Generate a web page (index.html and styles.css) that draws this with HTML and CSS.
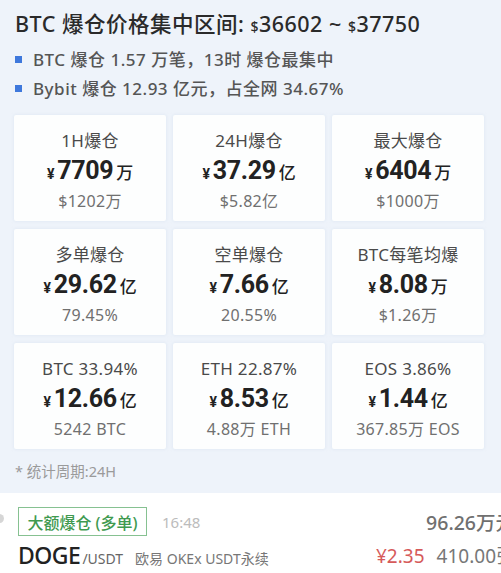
FILE: index.html
```html
<!DOCTYPE html>
<html lang="zh-CN">
<head>
<meta charset="utf-8">
<title>BTC 爆仓</title>
<link rel="stylesheet" href="styles.css">
</head>
<body>
<div class="page">
  <header class="head">
    <h1 class="title">BTC 爆仓价格集中区间: <span class="dollar">$</span>36602 ~ <span class="dollar">$</span>37750</h1>
    <ul class="bullets">
      <li>BTC 爆仓 1.57 万笔，13时 爆仓最集中</li>
      <li>Bybit 爆仓 12.93 亿元，占全网 34.67%</li>
    </ul>
  </header>

  <section class="grid">
    <div class="card"><div class="lbl">1H爆仓</div><div class="val"><span class="cur">¥</span>7709<span class="unit">万</span></div><div class="sub">$1202万</div></div>
    <div class="card"><div class="lbl">24H爆仓</div><div class="val"><span class="cur">¥</span>37.29<span class="unit">亿</span></div><div class="sub">$5.82亿</div></div>
    <div class="card"><div class="lbl">最大爆仓</div><div class="val"><span class="cur">¥</span>6404<span class="unit">万</span></div><div class="sub">$1000万</div></div>
    <div class="card"><div class="lbl">多单爆仓</div><div class="val"><span class="cur">¥</span>29.62<span class="unit">亿</span></div><div class="sub">79.45%</div></div>
    <div class="card"><div class="lbl">空单爆仓</div><div class="val"><span class="cur">¥</span>7.66<span class="unit">亿</span></div><div class="sub">20.55%</div></div>
    <div class="card"><div class="lbl">BTC每笔均爆</div><div class="val"><span class="cur">¥</span>8.08<span class="unit">万</span></div><div class="sub">$1.26万</div></div>
    <div class="card"><div class="lbl">BTC 33.94%</div><div class="val"><span class="cur">¥</span>12.66<span class="unit">亿</span></div><div class="sub">5242 BTC</div></div>
    <div class="card"><div class="lbl">ETH 22.87%</div><div class="val"><span class="cur">¥</span>8.53<span class="unit">亿</span></div><div class="sub">4.88万 ETH</div></div>
    <div class="card"><div class="lbl">EOS 3.86%</div><div class="val"><span class="cur">¥</span>1.44<span class="unit">亿</span></div><div class="sub">367.85万 EOS</div></div>
  </section>

  <p class="note">* 统计周期:24H</p>

  <section class="feed">
    <span class="dot"></span>
    <div class="row">
      <div class="left">
        <span class="badge">大额爆仓 (多单)</span>
        <span class="time">16:48</span>
      </div>
      <div class="amount">96.26万元</div>
    </div>
    <div class="row row2">
      <div class="left">
        <span class="sym">DOGE</span><span class="quote">/USDT</span>
        <span class="ex">欧易 OKEx USDT永续</span>
      </div>
      <div class="right2">
        <span class="price">¥2.35</span>
        <span class="qty">410.00张</span>
      </div>
    </div>
  </section>
</div>
</body>
</html>
```
FILE: styles.css
```css
html, body {
  margin: 0;
  padding: 0;
}
body {
  background: #eef3fa;
  font-family: "Noto Sans", "Noto Sans CJK SC", sans-serif;
  color: #333;
  overflow: hidden;
  width: 501px;
  height: 573px;
}
.page {
  display: flex;
  flex-direction: column;
  height: 573px;
}
.head {
  padding: 10px 15px 0 15px;
}
.title {
  margin: 0;
  font-size: 21.5px;
  line-height: 28px;
  font-weight: 500;
  color: #2a2a2a;
  letter-spacing: 0.5px;
  white-space: nowrap;
}
.dollar {
  font-size: 14px;
}
.bullets {
  list-style: none;
  margin: 4px 0 0 0;
  padding: 0;
}
.bullets li {
  display: flex;
  align-items: center;
  gap: 11px;
  font-size: 17px;
  line-height: 29px;
  font-weight: 500;
  color: #555;
  letter-spacing: 0.5px;
  white-space: nowrap;
}
.bullets li::before {
  content: "";
  width: 7px;
  height: 7px;
  background: #3e78dc;
  flex: none;
}
.grid {
  margin: 12px 17px 0 14px;
  display: grid;
  grid-template-columns: repeat(3, 1fr);
  grid-auto-rows: 106px;
  column-gap: 7px;
  row-gap: 8px;
}
.card {
  background: #fdfefe;
  border-radius: 2px;
  box-shadow: 0 0 3px rgba(200, 215, 235, 0.5);
  display: flex;
  flex-direction: column;
  align-items: center;
  padding-top: 14px;
  box-sizing: border-box;
}
.lbl {
  font-size: 17px;
  line-height: 23px;
  color: #4a4a4a;
  letter-spacing: 0.3px;
  white-space: nowrap;
}
.val {
  margin-top: 2px;
  font-family: Roboto, "Noto Sans", "Noto Sans CJK SC", sans-serif;
  font-size: 25px;
  line-height: 34px;
  font-weight: 700;
  color: #222;
  display: flex;
  align-items: baseline;
  letter-spacing: -0.3px;
}
.cur {
  font-size: 14px;
  margin-right: 3px;
  font-weight: 700;
}
.unit {
  font-family: "Noto Sans CJK SC", sans-serif;
  font-size: 17px;
  font-weight: 500;
  margin-left: 3px;
}
.sub {
  font-size: 16px;
  line-height: 20px;
  color: #707070;
  letter-spacing: 0.3px;
  white-space: nowrap;
}
.note {
  margin: 12px 0 0 15px;
  font-size: 14.5px;
  line-height: 20px;
  color: #9a9a9a;
}
.feed {
  position: relative;
  flex: 1;
  margin-top: 12px;
  margin-right: -14px;
  background: #fff;
  padding: 14px 0 0 18px;
}
.dot {
  position: absolute;
  left: -5px;
  top: 21px;
  width: 9px;
  height: 9px;
  border-radius: 50%;
  background: #d6d6d6;
}
.row {
  display: flex;
  justify-content: space-between;
  align-items: center;
  height: 29px;
}
.row2 {
  margin-top: 4px;
  height: 30px;
}
.left {
  display: flex;
  align-items: center;
}
.row2 .left {
  align-items: baseline;
}
.badge {
  box-sizing: border-box;
  height: 29px;
  width: 129px;
  border: 1px solid #86c191;
  color: #3f9a50;
  font-size: 16px;
  font-weight: 500;
  display: flex;
  align-items: center;
  justify-content: center;
  white-space: nowrap;
}
.time {
  margin-left: 15px;
  font-size: 15px;
  color: #bcbcbc;
}
.amount {
  font-size: 19.5px;
  font-weight: 500;
  color: #707070;
  white-space: nowrap;
}
.sym {
  font-size: 23px;
  color: #222;
  font-weight: 500;
  letter-spacing: -0.5px;
}
.quote {
  font-size: 14px;
  color: #666;
  margin-left: 2px;
}
.ex {
  margin-left: 12px;
  font-size: 14px;
  color: #777;
}
.right2 {
  display: flex;
  align-items: baseline;
  white-space: nowrap;
}
.price {
  font-size: 19px;
  color: #d65a5a;
}
.qty {
  margin-left: 12px;
  font-size: 19px;
  color: #777;
}
```
